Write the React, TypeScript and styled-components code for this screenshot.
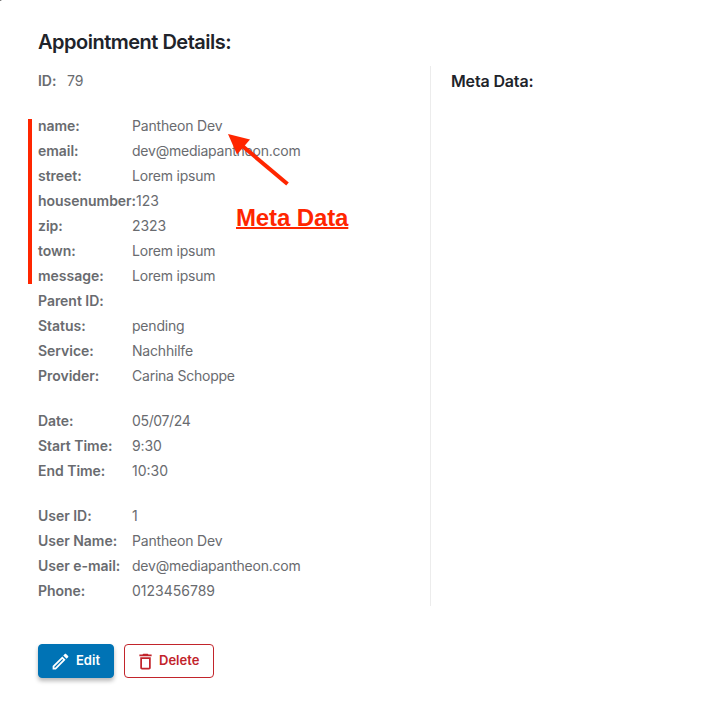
import React from "react";
import styled, { createGlobalStyle } from "styled-components";

const GlobalStyle = createGlobalStyle`
  * { box-sizing: border-box; }
  body { margin: 0; background: #fff; overflow: hidden; }
`;

const Page = styled.main`
  position: relative;
  width: 723px;
  height: 706px;
  padding: 28px 38px 0;
  background: #fff;
  color: #696b6f;
  font-family: Inter, "Liberation Sans", sans-serif;
  font-size: 14px;
`;

const Corner = styled.svg`
  position: absolute;
  top: 0;
  left: 0;
`;

const Title = styled.h1`
  margin: 0;
  height: 38px;
  font-size: 20px;
  font-weight: 600;
  line-height: 28px;
  letter-spacing: -0.5px;
  color: #20232a;
`;

const Columns = styled.div`
  display: grid;
  grid-template-columns: 393px 1fr;
  height: 540px;
`;

const Details = styled.section`
  display: flex;
  flex-direction: column;
  gap: 20px;
  padding-top: 2px;
  border-right: 1px solid #ececec;
`;

const MetaPanel = styled.section`
  padding-left: 20px;
`;

const MetaTitle = styled.h2`
  margin: 0;
  font-size: 16px;
  font-weight: 600;
  line-height: 30px;
  letter-spacing: -0.15px;
  color: #20232a;
`;

const Group = styled.dl`
  position: relative;
  margin: 0;
`;

const Row = styled.div<{ $compact?: boolean }>`
  display: grid;
  grid-template-columns: ${(p) => (p.$compact ? "29px" : "minmax(94px, max-content)")} 1fr;
  height: 25px;
  line-height: 25px;
  white-space: nowrap;
`;

const Label = styled.dt`
  font-weight: 600;
  letter-spacing: -0.03px;
`;

const Value = styled.dd<{ $tracking?: number }>`
  margin: 0;
  letter-spacing: ${(p) => p.$tracking ?? -0.23}px;
`;

const Marker = styled.div`
  position: absolute;
  top: 6px;
  left: -10px;
  width: 4px;
  height: 165px;
  background: #ff2600;
`;

const Arrow = styled.svg`
  position: absolute;
  top: 17px;
  left: 187px;
`;

const Callout = styled.div`
  position: absolute;
  top: 90px;
  left: 198px;
  font: 700 24px/30px "Liberation Sans", sans-serif;
  color: #ff2600;
  text-decoration: underline;
  text-decoration-thickness: 2px;
  text-underline-offset: 1px;
  letter-spacing: -0.12px;
  white-space: nowrap;
`;

const Actions = styled.div`
  display: flex;
  gap: 10px;
  margin-top: 38px;
`;

const Button = styled.button<{ $kind: "primary" | "danger" }>`
  display: flex;
  align-items: center;
  gap: ${(p) => (p.$kind === "primary" ? 5 : 3)}px;
  width: ${(p) => (p.$kind === "primary" ? 76 : 90)}px;
  height: 34px;
  padding: 0 0 0 ${(p) => (p.$kind === "primary" ? 11 : 10)}px;
  border: 1px solid ${(p) => (p.$kind === "primary" ? "#0073b5" : "#c2242b")};
  border-radius: 4px;
  background: ${(p) => (p.$kind === "primary" ? "#0073b5" : "#fff")};
  color: ${(p) => (p.$kind === "primary" ? "#fff" : "#c2242b")};
  box-shadow: ${(p) => (p.$kind === "primary" ? "0 3px 4px rgba(0, 0, 0, 0.28)" : "none")};
  font: 600 13px/20px Inter, sans-serif;
`;

const ButtonText = styled.span`
  padding-bottom: 2px;
`;

const Icon = ({ d }: { d: string }) => (
  <svg width="21" height="21" viewBox="0 0 24 24" fill="currentColor" aria-hidden="true">
    <path d={d} />
  </svg>
);

type Entry = [label: string, value: string, tracking?: number];

const metaRows: Entry[] = [
  ["name:", "Pantheon Dev", -0.18],
  ["email:", "dev@mediapantheon.com"],
  ["street:", "Lorem ipsum", -0.2],
  ["housenumber:", "123", 0],
  ["zip:", "2323", -0.1],
  ["town:", "Lorem ipsum", -0.2],
  ["message:", "Lorem ipsum", -0.2],
  ["Parent ID:", ""],
  ["Status:", "pending", -0.2],
  ["Service:", "Nachhilfe", -0.2],
  ["Provider:", "Carina Schoppe"],
];

const timeRows: Entry[] = [
  ["Date:", "05/07/24", -0.35],
  ["Start Time:", "9:30", -0.1],
  ["End Time:", "10:30", 0],
];

const userRows: Entry[] = [
  ["User ID:", "1"],
  ["User Name:", "Pantheon Dev", -0.18],
  ["User e-mail:", "dev@mediapantheon.com"],
  ["Phone:", "0123456789", 0],
];

const Rows = ({ items }: { items: Entry[] }) => (
  <>
    {items.map(([label, value, tracking]) => (
      <Row key={label}>
        <Label>{label}</Label>
        <Value $tracking={tracking}>{value}</Value>
      </Row>
    ))}
  </>
);

export default function App() {
  return (
    <>
      <GlobalStyle />
      <Page>
        <Corner width="3" height="3" aria-hidden="true">
          <path d="M0 0H2L0 1Z" fill="#555" />
        </Corner>
        <Title>Appointment Details:</Title>
        <Columns>
          <Details>
            <Group>
              <Row $compact>
                <Label>ID:</Label>
                <Value $tracking={-0.1}>79</Value>
              </Row>
            </Group>
            <Group>
              <Rows items={metaRows} />
              <Marker />
              <Arrow width="66" height="56" viewBox="0 0 66 56" aria-hidden="true">
                <path d="M15 14L62.5 54" stroke="#ff2600" strokeWidth="4" />
                <path d="M3 4L25 9.5L12 24.5Z" fill="#ff2600" />
              </Arrow>
              <Callout>Meta Data</Callout>
            </Group>
            <Group>
              <Rows items={timeRows} />
            </Group>
            <Group>
              <Rows items={userRows} />
            </Group>
          </Details>
          <MetaPanel>
            <MetaTitle>Meta Data:</MetaTitle>
          </MetaPanel>
        </Columns>
        <Actions>
          <Button $kind="primary">
            <Icon d="M14.06 9.02l.92.92L5.92 19H5v-.92l9.06-9.06M17.66 3c-.25 0-.51.1-.7.29l-1.83 1.83 3.75 3.75 1.83-1.83c.39-.39.39-1.02 0-1.41l-2.34-2.34c-.2-.2-.45-.29-.71-.29zm-3.6 3.19L3 17.25V21h3.75L17.81 9.94l-3.75-3.75z" />
            <ButtonText>Edit</ButtonText>
          </Button>
          <Button $kind="danger">
            <Icon d="M6 19c0 1.1.9 2 2 2h8c1.1 0 2-.9 2-2V7H6v12zM8 9h8v10H8V9zm7.5-5l-1-1h-5l-1 1H5v2h14V4h-3.5z" />
            <ButtonText>Delete</ButtonText>
          </Button>
        </Actions>
      </Page>
    </>
  );
}
